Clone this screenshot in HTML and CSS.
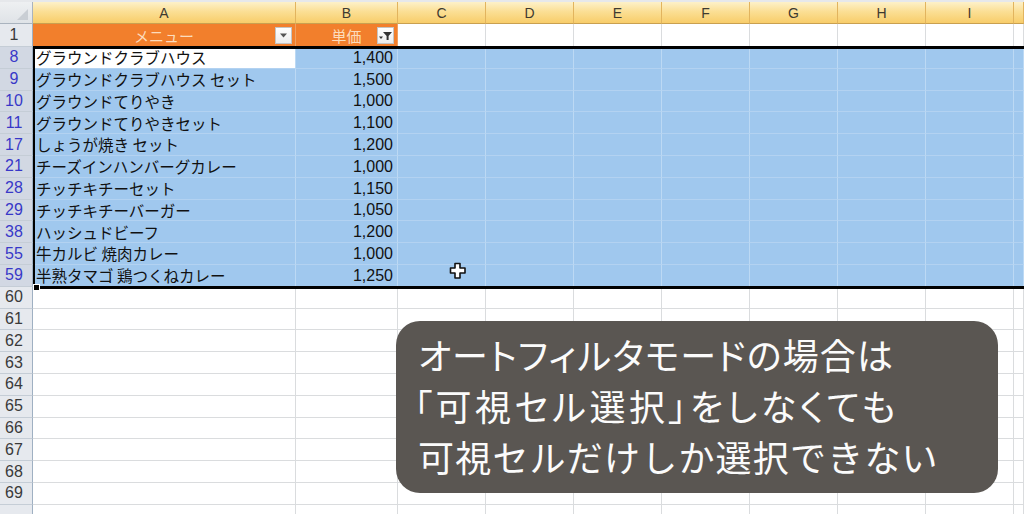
FILE: index.html
```html
<!DOCTYPE html>
<html lang="ja">
<head>
<meta charset="utf-8">
<link rel="stylesheet" href="styles.css">
</head>
<body>
<div class="sheet">
  <div class="topstrip"></div>
  <div class="row colhdr">
    <div class="corner"><span class="tri"></span></div>
    <div class="ch">A</div><div class="ch">B</div><div class="ch">C</div><div class="ch">D</div><div class="ch">E</div><div class="ch">F</div><div class="ch">G</div><div class="ch">H</div><div class="ch">I</div><div class="ch"></div>
  </div>
  <div class="row r1">
    <div class="rh">1</div>
    <div class="c title">メニュー<span class="fbtn"><svg width="9" height="5" viewBox="0 0 9 5"><path d="M1 0.5h7L4.5 4.5z" fill="#555"/></svg></span></div>
    <div class="c title">単価<span class="fbtn"><svg width="14" height="10" viewBox="0 0 14 10"><path d="M4 1h9L9.6 5v4H7.6V5z" fill="#333"/><path d="M0 5.5h4L2 8z" fill="#333"/></svg></span></div>
    <div class="c"></div><div class="c"></div><div class="c"></div><div class="c"></div><div class="c"></div><div class="c"></div><div class="c"></div><div class="c"></div>
  </div>

  <div class="row d sel-row"><div class="rh f">8</div><div class="c t active">グラウンドクラブハウス</div><div class="c n">1,400</div><div class="c"></div><div class="c"></div><div class="c"></div><div class="c"></div><div class="c"></div><div class="c"></div><div class="c"></div><div class="c"></div></div>
  <div class="row d sel-row"><div class="rh f">9</div><div class="c t">グラウンドクラブハウス セット</div><div class="c n">1,500</div><div class="c"></div><div class="c"></div><div class="c"></div><div class="c"></div><div class="c"></div><div class="c"></div><div class="c"></div><div class="c"></div></div>
  <div class="row d sel-row"><div class="rh f">10</div><div class="c t">グラウンドてりやき</div><div class="c n">1,000</div><div class="c"></div><div class="c"></div><div class="c"></div><div class="c"></div><div class="c"></div><div class="c"></div><div class="c"></div><div class="c"></div></div>
  <div class="row d sel-row"><div class="rh f">11</div><div class="c t">グラウンドてりやきセット</div><div class="c n">1,100</div><div class="c"></div><div class="c"></div><div class="c"></div><div class="c"></div><div class="c"></div><div class="c"></div><div class="c"></div><div class="c"></div></div>
  <div class="row d sel-row"><div class="rh f">17</div><div class="c t">しょうが焼き セット</div><div class="c n">1,200</div><div class="c"></div><div class="c"></div><div class="c"></div><div class="c"></div><div class="c"></div><div class="c"></div><div class="c"></div><div class="c"></div></div>
  <div class="row d sel-row"><div class="rh f">21</div><div class="c t">チーズインハンバーグカレー</div><div class="c n">1,000</div><div class="c"></div><div class="c"></div><div class="c"></div><div class="c"></div><div class="c"></div><div class="c"></div><div class="c"></div><div class="c"></div></div>
  <div class="row d sel-row"><div class="rh f">28</div><div class="c t">チッチキチーセット</div><div class="c n">1,150</div><div class="c"></div><div class="c"></div><div class="c"></div><div class="c"></div><div class="c"></div><div class="c"></div><div class="c"></div><div class="c"></div></div>
  <div class="row d sel-row"><div class="rh f">29</div><div class="c t">チッチキチーバーガー</div><div class="c n">1,050</div><div class="c"></div><div class="c"></div><div class="c"></div><div class="c"></div><div class="c"></div><div class="c"></div><div class="c"></div><div class="c"></div></div>
  <div class="row d sel-row"><div class="rh f">38</div><div class="c t">ハッシュドビーフ</div><div class="c n">1,200</div><div class="c"></div><div class="c"></div><div class="c"></div><div class="c"></div><div class="c"></div><div class="c"></div><div class="c"></div><div class="c"></div></div>
  <div class="row d sel-row"><div class="rh f">55</div><div class="c t">牛カルビ 焼肉カレー</div><div class="c n">1,000</div><div class="c"></div><div class="c"></div><div class="c"></div><div class="c"></div><div class="c"></div><div class="c"></div><div class="c"></div><div class="c"></div></div>
  <div class="row d sel-row"><div class="rh f">59</div><div class="c t">半熟タマゴ 鶏つくねカレー</div><div class="c n">1,250</div><div class="c"></div><div class="c"></div><div class="c"></div><div class="c"></div><div class="c"></div><div class="c"></div><div class="c"></div><div class="c"></div></div>

  <div class="row d"><div class="rh">60</div><div class="c"></div><div class="c"></div><div class="c"></div><div class="c"></div><div class="c"></div><div class="c"></div><div class="c"></div><div class="c"></div><div class="c"></div><div class="c"></div></div>
  <div class="row d"><div class="rh">61</div><div class="c"></div><div class="c"></div><div class="c"></div><div class="c"></div><div class="c"></div><div class="c"></div><div class="c"></div><div class="c"></div><div class="c"></div><div class="c"></div></div>
  <div class="row d"><div class="rh">62</div><div class="c"></div><div class="c"></div><div class="c"></div><div class="c"></div><div class="c"></div><div class="c"></div><div class="c"></div><div class="c"></div><div class="c"></div><div class="c"></div></div>
  <div class="row d"><div class="rh">63</div><div class="c"></div><div class="c"></div><div class="c"></div><div class="c"></div><div class="c"></div><div class="c"></div><div class="c"></div><div class="c"></div><div class="c"></div><div class="c"></div></div>
  <div class="row d"><div class="rh">64</div><div class="c"></div><div class="c"></div><div class="c"></div><div class="c"></div><div class="c"></div><div class="c"></div><div class="c"></div><div class="c"></div><div class="c"></div><div class="c"></div></div>
  <div class="row d"><div class="rh">65</div><div class="c"></div><div class="c"></div><div class="c"></div><div class="c"></div><div class="c"></div><div class="c"></div><div class="c"></div><div class="c"></div><div class="c"></div><div class="c"></div></div>
  <div class="row d"><div class="rh">66</div><div class="c"></div><div class="c"></div><div class="c"></div><div class="c"></div><div class="c"></div><div class="c"></div><div class="c"></div><div class="c"></div><div class="c"></div><div class="c"></div></div>
  <div class="row d"><div class="rh">67</div><div class="c"></div><div class="c"></div><div class="c"></div><div class="c"></div><div class="c"></div><div class="c"></div><div class="c"></div><div class="c"></div><div class="c"></div><div class="c"></div></div>
  <div class="row d"><div class="rh">68</div><div class="c"></div><div class="c"></div><div class="c"></div><div class="c"></div><div class="c"></div><div class="c"></div><div class="c"></div><div class="c"></div><div class="c"></div><div class="c"></div></div>
  <div class="row d"><div class="rh">69</div><div class="c"></div><div class="c"></div><div class="c"></div><div class="c"></div><div class="c"></div><div class="c"></div><div class="c"></div><div class="c"></div><div class="c"></div><div class="c"></div></div>
  <div class="row d"><div class="rh"></div><div class="c"></div><div class="c"></div><div class="c"></div><div class="c"></div><div class="c"></div><div class="c"></div><div class="c"></div><div class="c"></div><div class="c"></div><div class="c"></div></div>

  <div class="selbox"><span class="handle"></span></div>
  <svg class="cursor" width="18" height="18" viewBox="0 0 18 18"><path d="M6 1.5h5v4.5h5v5h-5v5H6v-5H1.5V6H6z" fill="#fff" stroke="#111" stroke-width="1.6" stroke-linejoin="round"/></svg>

  <div class="callout">
    <p class="l1">オートフィルタモードの場合は</p>
    <p class="l2">「可視セル選択」をしなくても</p>
    <p class="l3">可視セルだけしか選択できない</p>
  </div>
</div>
</body>
</html>
```

FILE: styles.css
```css
* { box-sizing: border-box; }
html, body { margin: 0; padding: 0; }
body {
  width: 1024px;
  height: 514px;
  overflow: hidden;
  background: #fff;
  font-family: "Noto Sans CJK JP", "Liberation Sans", sans-serif;
}
.sheet { position: relative; width: 1024px; height: 514px; overflow: hidden; }
.topstrip { height: 3px; background: #e6e8eb; border-bottom: 1px solid #d0d4d8; }
.row {
  display: grid;
  grid-template-columns: 33px 263px 102px repeat(7, 88px) 1fr;
}
.colhdr { height: 22px; margin-top: -1px; }
.corner {
  position: relative;
  background: linear-gradient(#eef0f2, #dfe3e7);
  border-right: 1px solid #a9b3be;
  border-bottom: 1px solid #a9b3be;
}
.tri {
  position: absolute; right: 4px; bottom: 3px;
  width: 0; height: 0;
  border-left: 11px solid transparent;
  border-bottom: 11px solid #c9ced4;
}
.ch {
  background: linear-gradient(#fdf1c9 0%, #fbdf95 45%, #f8cd6a 100%);
  border-right: 1px solid #e2b45e;
  border-bottom: 1px solid #c9a050;
  font-family: "Liberation Sans", sans-serif;
  font-size: 14px;
  color: #3e3a30;
  display: flex; align-items: center; justify-content: center;
  line-height: 1;
  padding-top: 1px;
}
.r1 { height: 23px; }
.rh {
  background: #e6e9ee;
  border-right: 1px solid #9fb0c2;
  border-bottom: 1px solid #c5cdd6;
  font-family: "Liberation Sans", sans-serif;
  font-size: 16px;
  color: #3a3a3a;
  display: flex; align-items: center; justify-content: center;
  padding-right: 4px;
  line-height: 1;
}
.rh.f { background: #d2d8e3; color: #3838c8; }
.c {
  border-right: 1px solid #dadcde;
  border-bottom: 1px solid #dadcde;
  font-size: 15.5px;
  color: #111;
  display: flex; align-items: center;
  white-space: nowrap;
  overflow: hidden;
  line-height: 1;
}
.c.title {
  position: relative;
  background: #f27f2c;
  border-right: 1px solid #f0a060;
  border-bottom: none;
  color: #fcdcbc;
  justify-content: center;
  font-size: 15px;
}
.fbtn {
  position: absolute; right: 3px; top: 3px;
  width: 17px; height: 17px;
  background: linear-gradient(#ffffff, #ececec);
  border: 1px solid #c4c4c4;
  display: flex; align-items: center; justify-content: center;
}
.d { height: 21.8px; }
.sel-row .c { background: #a0c8ee; border-right-color: #bcd9f4; border-bottom-color: #b3d2f1; }
.sel-row .c.active { background: #fff; }
.c.t { padding-left: 3px; padding-top: 1px; }
.c.n {
  justify-content: flex-end;
  padding-right: 4px;
  padding-top: 1px;
  font-family: "Liberation Sans", sans-serif;
  font-size: 16px;
}
.selbox {
  position: absolute;
  left: 33px; top: 46px;
  width: 1000px; height: 243px;
  border: 3px solid #000;
  border-left-width: 2px;
  pointer-events: none;
}
.handle {
  position: absolute; left: -2px; bottom: -5px;
  width: 7px; height: 7px;
  background: #000;
  border: 1px solid #fff;
}
.cursor { position: absolute; left: 449px; top: 262px; }
.callout {
  position: absolute;
  left: 396px; top: 321px;
  width: 602px; height: 172px;
  border-radius: 24px;
  background: #5a5652;
  color: #fbfbfb;
  padding: 8px 0 0 22px;
  font-size: 36px;
  line-height: 51px;
}
.callout p { margin: 0; white-space: nowrap; }
.l1 { font-feature-settings: "palt"; letter-spacing: 1.2px; }
.l2 { margin-left: -4px !important; font-feature-settings: "palt"; letter-spacing: 3.5px; }
.l3 { letter-spacing: 1.2px; }
```
